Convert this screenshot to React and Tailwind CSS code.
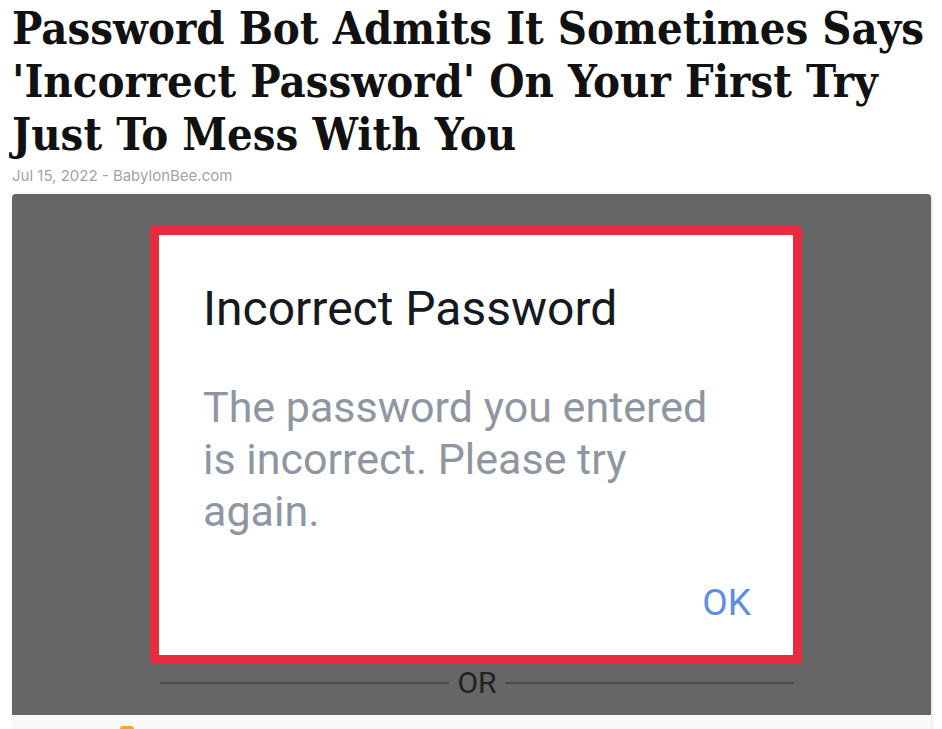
import React from "react";

const App = () => {
  return (
    <div className="bg-white min-h-screen px-[12px] pt-[2px]">
      <h1 className="font-['DejaVu_Serif',serif] font-bold font-stretch-condensed text-[#111] text-[45px] leading-[53px] tracking-[0px]">
        Password Bot Admits It Sometimes Says 'Incorrect Password' On Your First Try Just To Mess With You
      </h1>
      <p className="mt-[6px] font-['Inter',sans-serif] text-[15px] leading-[18px] text-[#a3a3ab]">
        Jul 15, 2022 - BabylonBee.com
      </p>

      <div className="mt-[9px] w-[919px] rounded-t-[4px] bg-[#f9f9f9] shadow-[1px_0_3px_rgba(0,0,0,0.12)] overflow-hidden">
        <div className="h-[521px] bg-[#666666] pt-[32px]">
          <div className="ml-[138px] w-[652px] h-[438px] rounded-[4px] border-[9px] border-[#e92b40] bg-white font-['Roboto',sans-serif]">
            <div className="pl-[44px] pt-[46px] text-[48px] leading-[56px] text-[#151a22]">
              Incorrect Password
            </div>
            <div className="pl-[44px] pt-[44px] text-[43px] leading-[52px] text-[#8f96a2]">
              The password you entered
              <br />
              is incorrect. Please try
              <br />
              again.
            </div>
            <div className="flex justify-end pr-[42px] pt-[46px] text-[37px] leading-[40px] text-[#5b8fe0]">
              OK
            </div>
          </div>
          <div className="ml-[148px] w-[634px] flex items-center gap-[8px] mt-[2px] font-['Roboto',sans-serif]">
            <div className="flex-1 h-[2px] bg-[#4a4a4a]" />
            <span className="text-[30px] leading-[34px] text-[#222]">OR</span>
            <div className="flex-1 h-[2px] bg-[#4a4a4a]" />
          </div>
        </div>
        <div className="h-[20px] relative">
          <div className="absolute left-[108px] top-[11px] w-[14px] h-[6px] rounded-t-[3px] bg-[#f5a623]" />
          <div className="absolute left-[187px] top-[14px] w-[2px] h-[3px] bg-[#f5a623]" />
        </div>
      </div>
    </div>
  );
};

export default App;
